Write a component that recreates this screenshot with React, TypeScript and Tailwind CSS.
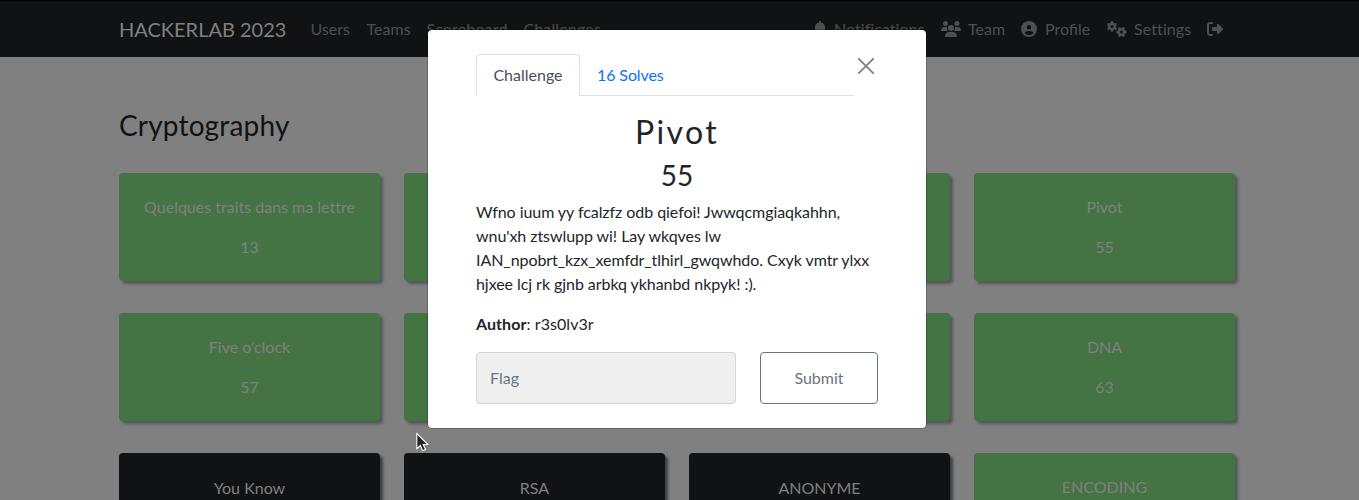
import { FaBell, FaUsers, FaCircleUser, FaGears, FaRightFromBracket } from "react-icons/fa6";

type Challenge = { name: string; value: string; solved: boolean };

const challenges: Challenge[] = [
  { name: "Quelques traits dans ma lettre", value: "13", solved: true },
  { name: "", value: "", solved: true },
  { name: "", value: "", solved: true },
  { name: "Pivot", value: "55", solved: true },
  { name: "Five o'clock", value: "57", solved: true },
  { name: "", value: "", solved: true },
  { name: "", value: "", solved: true },
  { name: "DNA", value: "63", solved: true },
  { name: "You Know", value: "", solved: false },
  { name: "RSA", value: "", solved: false },
  { name: "ANONYME", value: "", solved: false },
  { name: "ENCODING", value: "", solved: true },
];

function Navbar() {
  return (
    <nav className="h-[57px] border-t border-black bg-[#101214] text-[#4e4f50]">
      <div className="ml-[119px] flex h-14 w-[1112px] items-center">
        <span className="mr-6 text-xl text-[#808080]">HACKERLAB 2023</span>
        <div className="flex gap-4">
          <span className="w-10">Users</span>
          <span className="w-11 tracking-[0.1px]">Teams</span>
          <span className="w-[81px] tracking-[0.15px]">Scoreboard</span>
          <span className="tracking-[0.15px]">Challenges</span>
        </div>
        <div className="mr-2 ml-auto flex gap-4">
          <span className="flex items-center"><FaBell className="mr-[7px] h-4 w-3.5" /><span className="w-[91px] tracking-[0.05px]">Notifications</span></span>
          <span className="flex items-center"><FaUsers className="mr-[7px] h-4 w-5" /><span className="w-[37px]">Team</span></span>
          <span className="flex items-center"><FaCircleUser className="mr-2 h-4 w-4" /><span className="w-[46px]">Profile</span></span>
          <span className="flex items-center"><FaGears className="mr-[7px] h-4 w-5" /><span className="w-[57px] tracking-[0.1px]">Settings</span></span>
          <span className="flex items-center"><FaRightFromBracket className="h-4 w-4" /></span>
        </div>
      </div>
    </nav>
  );
}

function Card({ name, value, solved }: Challenge) {
  return (
    <div
      className={
        solved
          ? "h-[108px] rounded bg-[#447344] pt-[22px] text-center text-[#808080] shadow-[3px_3px_3px_#54565a]"
          : "h-[108px] rounded bg-[#101214] pt-[23px] text-center text-[#808080] shadow-[3px_3px_3px_#3c4045]"
      }
    >
      <p className="mb-4 h-6 [font-variant-ligatures:none]">{name}</p>
      <p className="h-6">{value}</p>
    </div>
  );
}

function Modal() {
  return (
    <div className="absolute top-[29px] left-[427px] h-[400px] w-[500px] rounded-[5px] border border-black/20 bg-white bg-clip-padding pt-6 pr-12 pl-12 text-[#212529]">
      <div className="flex h-[42px]">
        <div className="flex w-[378px] border-b border-[#dee2e6]">
          <div className="h-[42px] w-[104px] rounded-t border border-b-0 border-[#dee2e6] bg-white pt-2 text-center text-[#495057]">
            Challenge
          </div>
          <div className="pt-[9px] pl-[17px] tracking-[-0.1px] text-[#0d6efd]">16 Solves</div>
        </div>
        <svg viewBox="0 0 16 16" className="mt-1 ml-1 h-4 w-4 text-[#7f7f7f]" fill="none" stroke="currentColor" strokeWidth="1.8" strokeLinecap="round">
          <path d="M.8.8l14.4 14.4M15.2.8L.8 15.2" />
        </svg>
      </div>
      <h2 className="mt-4 text-center text-[32px] leading-10 tracking-[2.4px]">Pivot</h2>
      <h3 className="mt-1 text-center text-[28px] leading-[38px]">55</h3>
      <p className="mt-1.5 w-[402px] tracking-[-0.06px]">
        Wfno iuum yy fcalzfz odb qiefoi! Jwwqcmgiaqkahhn,<br />
        wnu'xh ztswlupp wi! Lay wkqves lw<br />
        IAN_npobrt_kzx_xemfdr_tlhirl_gwqwhdo. Cxyk vmtr ylxx<br />
        hjxee lcj rk gjnb arbkq ykhanbd nkpyk! :).
      </p>
      <p className="mt-4 tracking-[0.07px]"><b>Author</b>: r3s0lv3r</p>
      <div className="mt-4 flex gap-6">
        <input
          placeholder="Flag"
          className="h-[52px] w-[260px] rounded border border-[#ced4da] bg-[#efefef] px-[13px] pb-0.5 placeholder:text-[#6c757d]"
        />
        <button className="h-[52px] w-[118px] rounded border border-[#6c757d] text-[#6c757d]">Submit</button>
      </div>
    </div>
  );
}

export default function App() {
  return (
    <div className="relative h-[500px] w-full overflow-hidden bg-[#808080] font-['Lato',sans-serif] text-base">
      <Navbar />
      <main className="ml-[119px] w-[1116px]">
        <h1 className="mt-[52px] mb-[31px] text-[28px] leading-[33px] tracking-[0.18px] text-[#101214]">Cryptography</h1>
        <div className="grid grid-cols-4 gap-x-6 gap-y-8">
          {challenges.map((c, i) => (
            <Card key={i} {...c} />
          ))}
        </div>
      </main>
      <Modal />
      <svg viewBox="0 0 13 20" className="absolute top-[432px] left-[416px] h-5 w-[13px]">
        <path d="M.8 1.5v15.2l3.5-3.2 2.4 5.2 2.8-1.2-2.3-5h4.7z" fill="#222427" stroke="#fff" strokeWidth="1.1" />
      </svg>
    </div>
  );
}
